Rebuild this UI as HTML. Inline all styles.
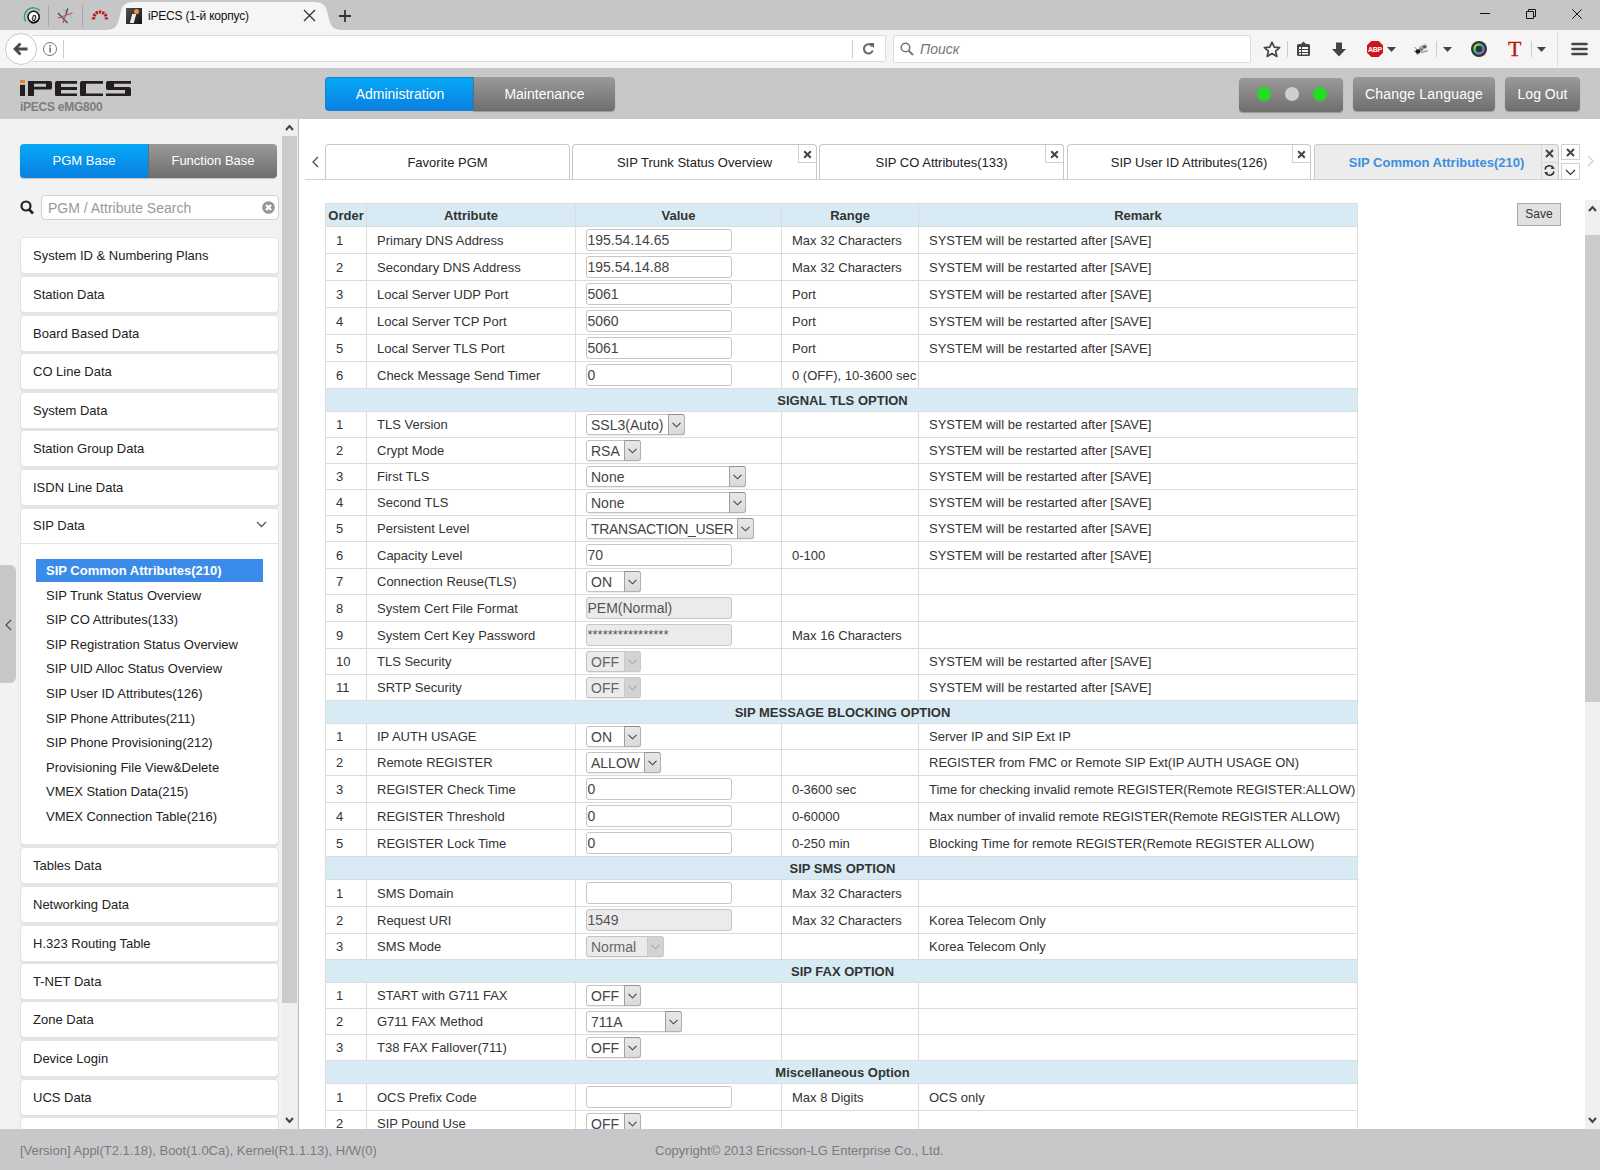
<!DOCTYPE html>
<html><head><meta charset="utf-8"><title>iPECS</title>
<style>
*{box-sizing:border-box}
html,body{margin:0;padding:0}
body{width:1600px;height:1170px;overflow:hidden;position:relative;font-family:"Liberation Sans",sans-serif;color:#333;background:#fff}
.a{position:absolute}
/* browser chrome */
#tabbar{left:0;top:0;width:1600px;height:30px;background:#c6c6c6}
#navbar{left:0;top:30px;width:1600px;height:38px;background:#f5f5f5}
#tab{left:108px;top:0;width:230px;height:30px}
#hdr{left:0;top:68px;width:1600px;height:51px;background:#c8c8ca}
.hbtn{position:absolute;top:77px;height:34px;border-radius:4px;background:linear-gradient(#9a9a9a,#6e6e6e);color:#fff;font-size:14px;text-align:center;line-height:35px;box-shadow:0 1px 1px rgba(0,0,0,.25)}
/* sidebar */
#side{left:0;top:119px;width:298px;height:1011px;background:#f2f2f2}
#sbline{left:298px;top:119px;width:1px;height:1010px;background:#bcbcbc}
.mi{position:absolute;left:20px;width:259px;height:37px;background:#fff;border:1px solid #e2e2e2;border-radius:4px;box-shadow:0 2px 0 #e4e4e4;font-size:13px;color:#222;padding-left:12px;line-height:35px}
.sub{position:absolute;left:36px;width:227px;height:23px;font-size:13px;color:#222;padding-left:10px;line-height:23px}
.sub.act{background:#3b8bea;color:#fff;font-weight:bold}
/* content */
#footer{left:0;top:1129px;width:1600px;height:41px;background:#c8c8ca;font-size:13px;color:#7a7a7a}
.tab{position:absolute;top:144px;height:35px;border:1px solid #c8c8c8;border-bottom:none;border-radius:4px 4px 0 0;background:#fff;font-size:13px;color:#222;text-align:center;line-height:35px}
.tx{position:absolute;width:18px;height:18px;border-left:1px solid #d0d0d0;border-bottom:1px solid #d0d0d0;background:transparent}
table.t{position:absolute;left:325px;top:203px;border-collapse:collapse;table-layout:fixed;width:1032px;font-size:13px;color:#333}
table.t td,table.t th{border:1px solid #dcdcdc;padding:0;white-space:nowrap;overflow:visible}
table.t th{background:#d8ebf4;font-weight:bold;height:23px;text-align:center;color:#333}
table.t tr.sec td{background:#d8ebf4;font-weight:bold;text-align:center;padding-left:2px;border-left-color:#dcdcdc;border-right-color:#dcdcdc}
.c0{text-align:left;padding-left:10px!important}
.c1{padding-left:10px!important}
.c2{padding-left:10px!important}
.c3{padding-left:10px!important}
.c4{padding-left:10px!important}
.inp{position:relative;top:-0.5px;height:22px;border:1px solid #c6c6c6;border-radius:3px;background:#fff;font-size:14px;color:#444;line-height:20px;padding-left:0.5px}
.inp.dis{background:#ebebeb;color:#555}
.sel{position:relative;top:-0.5px;height:21px;border:1px solid #c2c2c2;border-radius:3px;background:#fff;font-size:14px;color:#444;line-height:20px;padding-left:4px;box-shadow:0 1px 1px rgba(0,0,0,.08)}
.sel i{position:absolute;right:-1px;top:-1px;width:17px;height:21px;border:1px solid #b0b0b0;border-top-color:#909090;border-left-color:#a0a0a0;border-radius:0 3px 3px 0;background:linear-gradient(#e8e8e8,#dadada);color:#444;text-align:center}
.sel i svg{position:absolute;left:3px;top:7px}
.sel.dis{background:#ebebeb;color:#666}
.sel.dis i{background:#d3d3d3;color:#aaa;border-color:#cacaca}
</style></head>
<body>
<!-- ============ BROWSER TAB BAR ============ -->
<div id="tabbar" class="a">
  <!-- pinned tabs -->
  <svg class="a" style="left:22px;top:6px" width="20" height="20" viewBox="0 0 20 20">
    <path d="M3.7 15.5 A9 9 0 0 1 17.9 4.6" fill="none" stroke="#2aa866" stroke-width="1.4"/>
    <circle cx="11.6" cy="10.9" r="5.6" fill="#fff" stroke="#111" stroke-width="1.5"/>
    <path d="M9 16.4 A5.8 5.8 0 0 0 17 12" fill="none" stroke="#000" stroke-width="1.2"/>
    <text x="9.6" y="14.6" font-size="8.5" font-weight="bold" font-style="italic" font-family="Liberation Sans" fill="#111">0</text>
  </svg>
  <div class="a" style="left:48px;top:5px;width:1px;height:22px;background:#a9a9a9"></div>
  <svg class="a" style="left:56px;top:7px" width="19" height="17" viewBox="0 0 19 17">
    <path d="M2 6 L11.5 16" stroke="#3c4a66" stroke-width="1.2"/>
    <path d="M2 11 L16.5 6" stroke="#b8506a" stroke-width="1.2"/>
    <path d="M6.8 1.5 L16.5 11" stroke="#70b8d8" stroke-width="1"/>
    <path d="M11.8 1.5 L7 16" stroke="#b8506a" stroke-width="1.1"/>
    <path d="M11.8 1.5 L10 7" stroke="#3c4a66" stroke-width="1.1"/>
  </svg>
  <div class="a" style="left:82px;top:5px;width:1px;height:22px;background:#a9a9a9"></div>
  <svg class="a" style="left:90px;top:7px" width="20" height="16" viewBox="0 0 20 16">
    <path d="M3.8 12.4 A6.3 6.3 0 1 1 16.2 12.4" fill="none" stroke="#c01818" stroke-width="3.2" stroke-dasharray="2.3 1"/>
  </svg>
  <!-- active tab -->
  <svg class="a" style="left:106px;top:1px" width="236" height="29" viewBox="0 0 236 29">
    <path d="M0 29 C10 29 12 24 14 14 C16 4 19 1 28 1 L208 1 C217 1 220 4 222 14 C224 24 226 29 236 29 Z" fill="#f5f5f5"/>
  </svg>
  <div class="a" style="left:126px;top:8px;width:16px;height:16px;background:linear-gradient(135deg,#555,#111)">
    <div class="a" style="left:8px;top:1px;width:5px;height:5px;border-radius:50%;background:#f29040"></div>
    <div class="a" style="left:5px;top:6px;width:4px;height:9px;background:#eee;transform:skewX(-15deg)"></div>
  </div>
  <div class="a" style="left:148px;top:9px;font-size:12px;color:#111;white-space:nowrap;letter-spacing:-0.2px">iPECS (1-й корпус)</div>
  <svg class="a" style="left:303px;top:9px" width="13" height="13" viewBox="0 0 13 13"><path d="M1 1 L12 12 M12 1 L1 12" stroke="#333" stroke-width="1.3"/></svg>
  <svg class="a" style="left:338px;top:9px" width="14" height="14" viewBox="0 0 14 14"><path d="M7 1 V13 M1 7 H13" stroke="#333" stroke-width="1.8"/></svg>
  <!-- window controls -->
  <div class="a" style="left:1480px;top:13px;width:10px;height:1px;background:#111"></div>
  <svg class="a" style="left:1526px;top:9px" width="10" height="10" viewBox="0 0 10 10"><path d="M2.5 0.5 H9.5 V7.5 H7.5 M0.5 2.5 H7.5 V9.5 H0.5 Z M2.5 0.5 V2.5" fill="none" stroke="#111" stroke-width="1"/></svg>
  <svg class="a" style="left:1572px;top:9px" width="10" height="10" viewBox="0 0 10 10"><path d="M0.3 0.3 L9.7 9.7 M9.7 0.3 L0.3 9.7" stroke="#111" stroke-width="1"/></svg>
</div>
<!-- ============ NAV BAR ============ -->
<div id="navbar" class="a">
  <div class="a" style="left:32px;top:5px;width:854px;height:27px;background:#fff;border:1px solid #dcdcdc;border-left:none;border-radius:0 2px 2px 0"></div>
  <div class="a" style="left:5px;top:3px;width:32px;height:32px;border-radius:50%;background:#fff;border:1px solid #c9c9c9"></div>
  <svg class="a" style="left:13px;top:12px" width="16" height="14" viewBox="0 0 16 14"><path d="M7.5 1.5 L2 7 L7.5 12.5 M2.5 7 H14.5" fill="none" stroke="#4a4a4a" stroke-width="2.8" stroke-linejoin="miter"/></svg>
  <svg class="a" style="left:42px;top:11px" width="16" height="16" viewBox="0 0 16 16"><circle cx="8" cy="8" r="6.5" fill="none" stroke="#777" stroke-width="1"/><rect x="7.3" y="6.5" width="1.6" height="5" fill="#777"/><rect x="7.3" y="4" width="1.6" height="1.6" fill="#777"/></svg>
  <div class="a" style="left:63px;top:10px;width:1px;height:18px;background:#ccc"></div>
  <div class="a" style="left:852px;top:10px;width:1px;height:18px;background:#ccc"></div>
  <svg class="a" style="left:862px;top:12px" width="13" height="13" viewBox="0 0 13 13"><path d="M10.5 4.5 A4.6 4.6 0 1 0 10.8 8.5" fill="none" stroke="#666" stroke-width="2"/><path d="M7 1 L12 1 L12 6 Z" fill="#666"/></svg>
  <div class="a" style="left:893px;top:5px;width:358px;height:28px;background:#fff;border:1px solid #dcdcdc;border-radius:2px"></div>
  <svg class="a" style="left:900px;top:12px" width="14" height="14" viewBox="0 0 14 14"><circle cx="5.5" cy="5.5" r="4.3" fill="none" stroke="#777" stroke-width="1.6"/><path d="M8.6 8.6 L13 13" stroke="#777" stroke-width="2"/></svg>
  <div class="a" style="left:920px;top:11px;font-size:14px;font-style:italic;color:#777">Поиск</div>
  <!-- toolbar icons -->
  <svg class="a" style="left:1263px;top:11px" width="18" height="17" viewBox="0 0 18 17"><path d="M9 1.2 L11.3 6.1 L16.6 6.6 L12.6 10.1 L13.8 15.4 L9 12.6 L4.2 15.4 L5.4 10.1 L1.4 6.6 L6.7 6.1 Z" fill="none" stroke="#444" stroke-width="1.7" stroke-linejoin="round"/></svg>
  <div class="a" style="left:1287px;top:11px;width:1px;height:16px;background:#ccc"></div>
  <svg class="a" style="left:1296px;top:11px" width="15" height="16" viewBox="0 0 15 16"><rect x="1" y="3" width="13" height="12" rx="1.5" fill="#444"/><path d="M5 3 L7.5 0.5 L10 3Z" fill="#444"/><rect x="3" y="6" width="2" height="2" fill="#f5f5f5"/><rect x="6" y="6" width="6" height="2" fill="#f5f5f5"/><rect x="3" y="9" width="2" height="2" fill="#f5f5f5"/><rect x="6" y="9" width="6" height="2" fill="#f5f5f5"/><rect x="3" y="12" width="2" height="1.5" fill="#f5f5f5"/><rect x="6" y="12" width="6" height="1.5" fill="#f5f5f5"/></svg>
  <svg class="a" style="left:1331px;top:12px" width="16" height="16" viewBox="0 0 16 16"><path d="M5 0.5 H11 V7 H15 L8 14.5 L1 7 H5 Z" fill="#444"/></svg>
  <svg class="a" style="left:1366px;top:10px" width="18" height="18" viewBox="0 0 18 18"><path d="M5.3 1 H12.7 L17 5.3 V12.7 L12.7 17 H5.3 L1 12.7 V5.3 Z" fill="#c9161b"/><text x="9" y="12.3" text-anchor="middle" font-size="7" font-weight="bold" font-family="Liberation Sans" fill="#fff" letter-spacing="-0.3">ABP</text></svg>
  <svg class="a" style="left:1387px;top:17px" width="9" height="5" viewBox="0 0 9 5"><path d="M0 0 H9 L4.5 5Z" fill="#444"/></svg>
  <svg class="a" style="left:1411px;top:11px" width="20" height="16" viewBox="0 0 20 16"><ellipse cx="12" cy="6.5" rx="4.5" ry="2.6" fill="#b0b0b0" transform="rotate(-25 12 6.5)"/><ellipse cx="13.5" cy="5.8" rx="1.8" ry="1.1" fill="#444"/><ellipse cx="9.5" cy="9" rx="3" ry="1.8" fill="#888" transform="rotate(-30 9.5 9)"/><ellipse cx="6.8" cy="10.5" rx="2.4" ry="2.3" fill="#1e1e1e"/><path d="M3.5 6 L6 8.5 M3 10 L5 11 M6 14 L7.5 12 M10 11.5 L14 10.5 L17 9.5" stroke="#666" stroke-width="0.9" fill="none"/></svg>
  <div class="a" style="left:1436px;top:11px;width:1px;height:16px;background:#ccc"></div>
  <svg class="a" style="left:1443px;top:17px" width="9" height="5" viewBox="0 0 9 5"><path d="M0 0 H9 L4.5 5Z" fill="#444"/></svg>
  <svg class="a" style="left:1470px;top:10px" width="18" height="18" viewBox="0 0 18 18"><circle cx="9" cy="9" r="8" fill="#333"/><circle cx="9" cy="9" r="4.5" fill="none" stroke="url(#rb)" stroke-width="2.4"/><defs><linearGradient id="rb" x1="0" y1="0" x2="1" y2="1"><stop offset="0" stop-color="#f4d03f"/><stop offset=".35" stop-color="#2ecc71"/><stop offset=".65" stop-color="#3498db"/><stop offset="1" stop-color="#e84393"/></linearGradient></defs></svg>
  <div class="a" style="left:1508px;top:7px;font-family:'Liberation Serif',serif;font-size:22px;font-weight:normal;color:#b8160d;line-height:24px;-webkit-text-stroke:0.3px #b8160d">T</div>
  <div class="a" style="left:1531px;top:11px;width:1px;height:16px;background:#ccc"></div>
  <svg class="a" style="left:1537px;top:17px" width="9" height="5" viewBox="0 0 9 5"><path d="M0 0 H9 L4.5 5Z" fill="#444"/></svg>
  <div class="a" style="left:1557px;top:2px;width:1px;height:34px;background:#ddd"></div>
  <svg class="a" style="left:1571px;top:12px" width="17" height="14" viewBox="0 0 17 14"><path d="M1.5 2 H15.5 M1.5 7 H15.5 M1.5 12 H15.5" stroke="#444" stroke-width="2.6" stroke-linecap="round"/></svg>
</div>
<!-- ============ APP HEADER ============ -->
<div id="hdr" class="a"></div>
<svg class="a" style="left:20px;top:79.5px" width="112" height="16.3" viewBox="0 0 112 17" preserveAspectRatio="none">
  <rect x="0" y="0" width="5" height="3" fill="#f07f22"/>
  <rect x="0" y="5" width="5" height="12" fill="#231f20"/>
  <path d="M8 1 H30 Q32 1 32 3 V8 Q32 10 30 10 H14 V17 H8 Z M14 4 V7 H26 V4 Z" fill="#231f20"/>
  <path d="M35 1 H57 V4 H41 V7.3 H57 V10.5 H41 V14 H57 V17 H37 Q35 17 35 15 V3 Q35 1 37 1 Z" fill="#231f20"/>
  <path d="M60 1 H83 V4 H66 V14 H83 V17 H62 Q60 17 60 15 V3 Q60 1 62 1 Z" fill="#231f20"/>
  <path d="M88 1 H111 V4 H94 V7.3 H109 Q111 7.3 111 9.3 V15 Q111 17 109 17 H86 V14 H105 V10.5 H88 Q86 10.5 86 8.5 V3 Q86 1 88 1 Z" fill="#231f20"/>
</svg>
<div class="a" style="left:20px;top:100px;font-size:12px;font-weight:bold;color:#7d7d7d;white-space:nowrap;letter-spacing:-0.25px">iPECS eMG800</div>
<div class="hbtn" style="left:325px;width:149px;background:linear-gradient(#05a9f7,#0a7fe0);border-radius:4px 0 0 4px;box-shadow:none;border:1px solid #1a7fc8;border-right:none;line-height:33px">Administration</div>
<div class="hbtn" style="left:473px;width:142px;border-radius:0 4px 4px 0;border-left:1px solid #5a6f80;line-height:34px">Maintenance</div>
<div class="hbtn" style="left:1239px;width:104px;top:78px;height:34px">
  <div class="a" style="left:17.5px;top:8.5px;width:14px;height:14px;border-radius:50%;background:#22dd22"></div>
  <div class="a" style="left:45.5px;top:8.5px;width:14px;height:14px;border-radius:50%;background:#cfcfcf"></div>
  <div class="a" style="left:73.5px;top:8.5px;width:14px;height:14px;border-radius:50%;background:#22dd22"></div>
</div>
<div class="hbtn" style="left:1353px;width:142px;letter-spacing:0.2px">Change Language</div>
<div class="hbtn" style="left:1505px;width:75px;">Log Out</div>

<!-- ============ SIDEBAR ============ -->
<div id="side" class="a"></div>
<div class="a" style="left:282px;top:119px;width:16px;height:1011px;background:#efefef"></div>
<div class="a" style="left:282px;top:136px;width:15px;height:867px;background:#cbcbcb"></div>
<svg class="a" style="left:285px;top:124px" width="9" height="7" viewBox="0 0 9 7"><path d="M1 6 L4.5 2 L8 6" fill="none" stroke="#444" stroke-width="2"/></svg>
<svg class="a" style="left:285px;top:1117px" width="9" height="7" viewBox="0 0 9 7"><path d="M1 1 L4.5 5 L8 1" fill="none" stroke="#444" stroke-width="2"/></svg>
<div id="sbline" class="a"></div>
<div class="a" style="left:20px;top:144px;width:257px;height:34px;border-radius:4px;overflow:hidden;box-shadow:0 1px 1px rgba(0,0,0,.2)">
  <div class="a" style="left:0;top:0;width:128px;height:34px;background:linear-gradient(#05a9f7,#0a7fe0);color:#fff;font-size:13px;text-align:center;line-height:34px">PGM Base</div>
  <div class="a" style="left:128px;top:0;width:129px;height:34px;background:linear-gradient(#9a9a9a,#6e6e6e);color:#fff;font-size:13px;text-align:center;line-height:34px;border-left:1px solid #5a6f80">Function Base</div>
</div>
<svg class="a" style="left:20px;top:200px" width="14" height="15" viewBox="0 0 14 15"><circle cx="6" cy="6" r="4.5" fill="none" stroke="#222" stroke-width="2.2"/><path d="M9.2 9.5 L13 13.5" stroke="#222" stroke-width="2.6"/></svg>
<div class="a" style="left:41px;top:195px;width:238px;height:25px;background:#fff;border:1px solid #cfcfcf;border-radius:4px;font-size:14px;color:#999;padding-left:6px;line-height:24px">PGM / Attribute Search</div>
<svg class="a" style="left:262px;top:201px" width="13" height="13" viewBox="0 0 13 13"><circle cx="6.5" cy="6.5" r="6.3" fill="#959595"/><path d="M4 4 L9 9 M9 4 L4 9" stroke="#fff" stroke-width="2.4"/></svg>
<div class="mi" style="top:237px">System ID &amp; Numbering Plans</div>
<div class="mi" style="top:276px">Station Data</div>
<div class="mi" style="top:315px">Board Based Data</div>
<div class="mi" style="top:353px">CO Line Data</div>
<div class="mi" style="top:392px">System Data</div>
<div class="mi" style="top:430px">Station Group Data</div>
<div class="mi" style="top:469px">ISDN Line Data</div>
<div class="mi" style="top:847px">Tables Data</div>
<div class="mi" style="top:886px">Networking Data</div>
<div class="mi" style="top:925px">H.323 Routing Table</div>
<div class="mi" style="top:963px">T-NET Data</div>
<div class="mi" style="top:1001px">Zone Data</div>
<div class="mi" style="top:1040px">Device Login</div>
<div class="mi" style="top:1079px">UCS Data</div>
<div class="mi" style="top:1117px"></div>
<div class="mi" style="top:508px;height:337px;line-height:34px;box-shadow:0 2px 0 #e4e4e4">SIP Data</div>
<div class="a" style="left:21px;top:543px;width:257px;height:1px;background:#e2e2e2"></div>
<svg class="a" style="left:256px;top:521px" width="11" height="7" viewBox="0 0 11 7"><path d="M1 1 L5.5 5.5 L10 1" fill="none" stroke="#555" stroke-width="1.3"/></svg>
<div class="sub act" style="top:559px">SIP Common Attributes(210)</div>
<div class="sub" style="top:584px">SIP Trunk Status Overview</div>
<div class="sub" style="top:608px">SIP CO Attributes(133)</div>
<div class="sub" style="top:633px">SIP Registration Status Overview</div>
<div class="sub" style="top:657px">SIP UID Alloc Status Overview</div>
<div class="sub" style="top:682px">SIP User ID Attributes(126)</div>
<div class="sub" style="top:707px">SIP Phone Attributes(211)</div>
<div class="sub" style="top:731px">SIP Phone Provisioning(212)</div>
<div class="sub" style="top:756px">Provisioning File View&amp;Delete</div>
<div class="sub" style="top:780px">VMEX Station Data(215)</div>
<div class="sub" style="top:805px">VMEX Connection Table(216)</div>
<div class="a" style="left:0;top:565px;width:16px;height:118px;background:#c8c8c8;border-radius:0 6px 6px 0"></div>
<svg class="a" style="left:5px;top:619px" width="7" height="12" viewBox="0 0 7 12"><path d="M6 1 L1 6 L6 11" fill="none" stroke="#444" stroke-width="1.1"/></svg>

<!-- ============ CONTENT ============ -->
<svg class="a" style="left:312px;top:156px" width="7" height="12" viewBox="0 0 7 12"><path d="M6 1 L1 6 L6 11" fill="none" stroke="#444" stroke-width="1.2"/></svg>
<div class="tab" style="left:325px;width:245px">Favorite PGM</div>
<div class="tab" style="left:572px;width:245px">SIP Trunk Status Overview</div>
<div class="tx" style="left:798px;top:145px"><svg class="a" style="left:4px;top:4.5px" width="9" height="9" viewBox="0 0 9 9"><path d="M1.2 1.2 L7.8 7.8 M7.8 1.2 L1.2 7.8" stroke="#444" stroke-width="2"/></svg></div>
<div class="tab" style="left:819px;width:245px">SIP CO Attributes(133)</div>
<div class="tx" style="left:1045px;top:145px"><svg class="a" style="left:4px;top:4.5px" width="9" height="9" viewBox="0 0 9 9"><path d="M1.2 1.2 L7.8 7.8 M7.8 1.2 L1.2 7.8" stroke="#444" stroke-width="2"/></svg></div>
<div class="tab" style="left:1067px;width:244px">SIP User ID Attributes(126)</div>
<div class="tx" style="left:1292px;top:145px"><svg class="a" style="left:4px;top:4.5px" width="9" height="9" viewBox="0 0 9 9"><path d="M1.2 1.2 L7.8 7.8 M7.8 1.2 L1.2 7.8" stroke="#444" stroke-width="2"/></svg></div>
<div class="tab" style="left:1314px;width:245px;background:#ececec;color:#3b8fe0;font-weight:bold">SIP Common Attributes(210)</div>
<div class="a" style="left:1541px;top:145px;width:1px;height:34px;background:#d8d8d8"></div>
<div class="a" style="left:1541px;top:162px;width:17px;height:1px;background:#d8d8d8"></div>
<svg class="a" style="left:1545px;top:149px" width="9" height="9" viewBox="0 0 9 9"><path d="M1 1 L8 8 M8 1 L1 8" stroke="#444" stroke-width="2"/></svg>
<svg class="a" style="left:1543px;top:164px" width="13" height="13" viewBox="0 0 13 13"><path d="M2 5.5 A4.6 4.6 0 0 1 10.6 4.2 M11 7.5 A4.6 4.6 0 0 1 2.4 8.8" fill="none" stroke="#333" stroke-width="1.4"/><path d="M9 1.5 L11.8 4.8 L8 5Z M4 11.5 L1.2 8.2 L5 8Z" fill="#333"/></svg>
<div class="a" style="left:1561px;top:144px;width:19px;height:16px;border:1px solid #d0d0d0;background:#fff"><svg class="a" style="left:4px;top:3px" width="9" height="9" viewBox="0 0 9 9"><path d="M1 1 L8 8 M8 1 L1 8" stroke="#444" stroke-width="2"/></svg></div>
<div class="a" style="left:1561px;top:163px;width:19px;height:17px;border:1px solid #d0d0d0;background:#fff"><svg class="a" style="left:3px;top:5px" width="11" height="7" viewBox="0 0 11 7"><path d="M1 1 L5.5 5.5 L10 1" fill="none" stroke="#333" stroke-width="1.2"/></svg></div>
<svg class="a" style="left:1587px;top:155px" width="7" height="12" viewBox="0 0 7 12"><path d="M1 1 L6 6 L1 11" fill="none" stroke="#ccc" stroke-width="1.2"/></svg>

<div class="a" style="left:305px;top:179px;width:1275px;height:1px;background:#d0d0d0"></div>
<table class="t">
<colgroup><col style="width:41px"><col style="width:209px"><col style="width:206px"><col style="width:137px"><col style="width:439px"></colgroup>
<tr><th>Order</th><th>Attribute</th><th>Value</th><th>Range</th><th>Remark</th></tr>
<tr style="height:27px"><td class="c0">1</td><td class="c1">Primary DNS Address</td><td class="c2"><div class="inp" style="width:146px">195.54.14.65</div></td><td class="c3">Max 32 Characters</td><td class="c4">SYSTEM will be restarted after [SAVE]</td></tr>
<tr style="height:27px"><td class="c0">2</td><td class="c1">Secondary DNS Address</td><td class="c2"><div class="inp" style="width:146px">195.54.14.88</div></td><td class="c3">Max 32 Characters</td><td class="c4">SYSTEM will be restarted after [SAVE]</td></tr>
<tr style="height:27px"><td class="c0">3</td><td class="c1">Local Server UDP Port</td><td class="c2"><div class="inp" style="width:146px">5061</div></td><td class="c3">Port</td><td class="c4">SYSTEM will be restarted after [SAVE]</td></tr>
<tr style="height:27px"><td class="c0">4</td><td class="c1">Local Server TCP Port</td><td class="c2"><div class="inp" style="width:146px">5060</div></td><td class="c3">Port</td><td class="c4">SYSTEM will be restarted after [SAVE]</td></tr>
<tr style="height:27px"><td class="c0">5</td><td class="c1">Local Server TLS Port</td><td class="c2"><div class="inp" style="width:146px">5061</div></td><td class="c3">Port</td><td class="c4">SYSTEM will be restarted after [SAVE]</td></tr>
<tr style="height:27px"><td class="c0">6</td><td class="c1">Check Message Send Timer</td><td class="c2"><div class="inp" style="width:146px">0</div></td><td class="c3">0 (OFF), 10-3600 sec</td><td class="c4"></td></tr>
<tr class="sec" style="height:23px"><td colspan="5">SIGNAL TLS OPTION</td></tr>
<tr style="height:26px"><td class="c0">1</td><td class="c1">TLS Version</td><td class="c2"><div class="sel" style="width:99px"><span>SSL3(Auto)</span><i><svg width="9" height="6" viewBox="0 0 9 6"><path d="M0.5 0.8 L4.5 4.8 L8.5 0.8" fill="none" stroke="currentColor" stroke-width="1.1"/></svg></i></div></td><td class="c3"></td><td class="c4">SYSTEM will be restarted after [SAVE]</td></tr>
<tr style="height:26px"><td class="c0">2</td><td class="c1">Crypt Mode</td><td class="c2"><div class="sel" style="width:55px"><span>RSA</span><i><svg width="9" height="6" viewBox="0 0 9 6"><path d="M0.5 0.8 L4.5 4.8 L8.5 0.8" fill="none" stroke="currentColor" stroke-width="1.1"/></svg></i></div></td><td class="c3"></td><td class="c4">SYSTEM will be restarted after [SAVE]</td></tr>
<tr style="height:26px"><td class="c0">3</td><td class="c1">First TLS</td><td class="c2"><div class="sel" style="width:160px"><span>None</span><i><svg width="9" height="6" viewBox="0 0 9 6"><path d="M0.5 0.8 L4.5 4.8 L8.5 0.8" fill="none" stroke="currentColor" stroke-width="1.1"/></svg></i></div></td><td class="c3"></td><td class="c4">SYSTEM will be restarted after [SAVE]</td></tr>
<tr style="height:26px"><td class="c0">4</td><td class="c1">Second TLS</td><td class="c2"><div class="sel" style="width:160px"><span>None</span><i><svg width="9" height="6" viewBox="0 0 9 6"><path d="M0.5 0.8 L4.5 4.8 L8.5 0.8" fill="none" stroke="currentColor" stroke-width="1.1"/></svg></i></div></td><td class="c3"></td><td class="c4">SYSTEM will be restarted after [SAVE]</td></tr>
<tr style="height:26px"><td class="c0">5</td><td class="c1">Persistent Level</td><td class="c2"><div class="sel" style="width:168px"><span style="letter-spacing:-0.3px">TRANSACTION_USER</span><i><svg width="9" height="6" viewBox="0 0 9 6"><path d="M0.5 0.8 L4.5 4.8 L8.5 0.8" fill="none" stroke="currentColor" stroke-width="1.1"/></svg></i></div></td><td class="c3"></td><td class="c4">SYSTEM will be restarted after [SAVE]</td></tr>
<tr style="height:27px"><td class="c0">6</td><td class="c1">Capacity Level</td><td class="c2"><div class="inp" style="width:146px">70</div></td><td class="c3">0-100</td><td class="c4">SYSTEM will be restarted after [SAVE]</td></tr>
<tr style="height:26px"><td class="c0">7</td><td class="c1">Connection Reuse(TLS)</td><td class="c2"><div class="sel" style="width:55px"><span>ON</span><i><svg width="9" height="6" viewBox="0 0 9 6"><path d="M0.5 0.8 L4.5 4.8 L8.5 0.8" fill="none" stroke="currentColor" stroke-width="1.1"/></svg></i></div></td><td class="c3"></td><td class="c4"></td></tr>
<tr style="height:27px"><td class="c0">8</td><td class="c1">System Cert File Format</td><td class="c2"><div class="inp dis" style="width:146px">PEM(Normal)</div></td><td class="c3"></td><td class="c4"></td></tr>
<tr style="height:27px"><td class="c0">9</td><td class="c1">System Cert Key Password</td><td class="c2"><div class="inp dis" style="width:146px;font-size:13px">****************</div></td><td class="c3">Max 16 Characters</td><td class="c4"></td></tr>
<tr style="height:26px"><td class="c0">10</td><td class="c1">TLS Security</td><td class="c2"><div class="sel dis" style="width:55px"><span>OFF</span><i><svg width="9" height="6" viewBox="0 0 9 6"><path d="M0.5 0.8 L4.5 4.8 L8.5 0.8" fill="none" stroke="currentColor" stroke-width="1.1"/></svg></i></div></td><td class="c3"></td><td class="c4">SYSTEM will be restarted after [SAVE]</td></tr>
<tr style="height:26px"><td class="c0">11</td><td class="c1">SRTP Security</td><td class="c2"><div class="sel dis" style="width:55px"><span>OFF</span><i><svg width="9" height="6" viewBox="0 0 9 6"><path d="M0.5 0.8 L4.5 4.8 L8.5 0.8" fill="none" stroke="currentColor" stroke-width="1.1"/></svg></i></div></td><td class="c3"></td><td class="c4">SYSTEM will be restarted after [SAVE]</td></tr>
<tr class="sec" style="height:23px"><td colspan="5">SIP MESSAGE BLOCKING OPTION</td></tr>
<tr style="height:26px"><td class="c0">1</td><td class="c1">IP AUTH USAGE</td><td class="c2"><div class="sel" style="width:55px"><span>ON</span><i><svg width="9" height="6" viewBox="0 0 9 6"><path d="M0.5 0.8 L4.5 4.8 L8.5 0.8" fill="none" stroke="currentColor" stroke-width="1.1"/></svg></i></div></td><td class="c3"></td><td class="c4">Server IP and SIP Ext IP</td></tr>
<tr style="height:26px"><td class="c0">2</td><td class="c1">Remote REGISTER</td><td class="c2"><div class="sel" style="width:75px"><span>ALLOW</span><i><svg width="9" height="6" viewBox="0 0 9 6"><path d="M0.5 0.8 L4.5 4.8 L8.5 0.8" fill="none" stroke="currentColor" stroke-width="1.1"/></svg></i></div></td><td class="c3"></td><td class="c4">REGISTER from FMC or Remote SIP Ext(IP AUTH USAGE ON)</td></tr>
<tr style="height:27px"><td class="c0">3</td><td class="c1">REGISTER Check Time</td><td class="c2"><div class="inp" style="width:146px">0</div></td><td class="c3">0-3600 sec</td><td class="c4" style="letter-spacing:-0.06px">Time for checking invalid remote REGISTER(Remote REGISTER:ALLOW)</td></tr>
<tr style="height:27px"><td class="c0">4</td><td class="c1">REGISTER Threshold</td><td class="c2"><div class="inp" style="width:146px">0</div></td><td class="c3">0-60000</td><td class="c4" style="letter-spacing:-0.05px">Max number of invalid remote REGISTER(Remote REGISTER ALLOW)</td></tr>
<tr style="height:27px"><td class="c0">5</td><td class="c1">REGISTER Lock Time</td><td class="c2"><div class="inp" style="width:146px">0</div></td><td class="c3">0-250 min</td><td class="c4" style="letter-spacing:-0.02px">Blocking Time for remote REGISTER(Remote REGISTER ALLOW)</td></tr>
<tr class="sec" style="height:23px"><td colspan="5">SIP SMS OPTION</td></tr>
<tr style="height:27px"><td class="c0">1</td><td class="c1">SMS Domain</td><td class="c2"><div class="inp" style="width:146px"></div></td><td class="c3">Max 32 Characters</td><td class="c4"></td></tr>
<tr style="height:27px"><td class="c0">2</td><td class="c1">Request URI</td><td class="c2"><div class="inp dis" style="width:146px">1549</div></td><td class="c3">Max 32 Characters</td><td class="c4">Korea Telecom Only</td></tr>
<tr style="height:26px"><td class="c0">3</td><td class="c1">SMS Mode</td><td class="c2"><div class="sel dis" style="width:78px"><span>Normal</span><i><svg width="9" height="6" viewBox="0 0 9 6"><path d="M0.5 0.8 L4.5 4.8 L8.5 0.8" fill="none" stroke="currentColor" stroke-width="1.1"/></svg></i></div></td><td class="c3"></td><td class="c4">Korea Telecom Only</td></tr>
<tr class="sec" style="height:23px"><td colspan="5">SIP FAX OPTION</td></tr>
<tr style="height:26px"><td class="c0">1</td><td class="c1">START with G711 FAX</td><td class="c2"><div class="sel" style="width:55px"><span>OFF</span><i><svg width="9" height="6" viewBox="0 0 9 6"><path d="M0.5 0.8 L4.5 4.8 L8.5 0.8" fill="none" stroke="currentColor" stroke-width="1.1"/></svg></i></div></td><td class="c3"></td><td class="c4"></td></tr>
<tr style="height:26px"><td class="c0">2</td><td class="c1">G711 FAX Method</td><td class="c2"><div class="sel" style="width:96px"><span>711A</span><i><svg width="9" height="6" viewBox="0 0 9 6"><path d="M0.5 0.8 L4.5 4.8 L8.5 0.8" fill="none" stroke="currentColor" stroke-width="1.1"/></svg></i></div></td><td class="c3"></td><td class="c4"></td></tr>
<tr style="height:26px"><td class="c0">3</td><td class="c1">T38 FAX Fallover(711)</td><td class="c2"><div class="sel" style="width:55px"><span>OFF</span><i><svg width="9" height="6" viewBox="0 0 9 6"><path d="M0.5 0.8 L4.5 4.8 L8.5 0.8" fill="none" stroke="currentColor" stroke-width="1.1"/></svg></i></div></td><td class="c3"></td><td class="c4"></td></tr>
<tr class="sec" style="height:23px"><td colspan="5">Miscellaneous Option</td></tr>
<tr style="height:27px"><td class="c0">1</td><td class="c1">OCS Prefix Code</td><td class="c2"><div class="inp" style="width:146px"></div></td><td class="c3">Max 8 Digits</td><td class="c4">OCS only</td></tr>
<tr style="height:26px"><td class="c0">2</td><td class="c1">SIP Pound Use</td><td class="c2"><div class="sel" style="width:55px"><span>OFF</span><i><svg width="9" height="6" viewBox="0 0 9 6"><path d="M0.5 0.8 L4.5 4.8 L8.5 0.8" fill="none" stroke="currentColor" stroke-width="1.1"/></svg></i></div></td><td class="c3"></td><td class="c4"></td></tr>
</table>
<div class="a" style="left:1517px;top:203px;width:44px;height:23px;border:1px solid #a8a8a8;background:#e1e1e1;font-size:12px;color:#333;text-align:center;line-height:21px">Save</div>
<!-- right scrollbar -->
<div class="a" style="left:1585px;top:200px;width:15px;height:930px;background:#f0f0f0"></div>
<div class="a" style="left:1585px;top:235px;width:15px;height:467px;background:#cbcbcb"></div>
<svg class="a" style="left:1588px;top:205px" width="9" height="7" viewBox="0 0 9 7"><path d="M1 6 L4.5 2 L8 6" fill="none" stroke="#444" stroke-width="2"/></svg>
<svg class="a" style="left:1588px;top:1117px" width="9" height="7" viewBox="0 0 9 7"><path d="M1 1 L4.5 5 L8 1" fill="none" stroke="#444" stroke-width="2"/></svg>

<!-- ============ FOOTER ============ -->
<div id="footer" class="a">
  <div class="a" style="left:20px;top:14px;white-space:nowrap">[Version] Appl(T2.1.18), Boot(1.0Ca), Kernel(R1.1.13), H/W(0)</div>
  <div class="a" style="left:655px;top:14px;white-space:nowrap">Copyright© 2013 Ericsson-LG Enterprise Co., Ltd.</div>
</div>
</body></html>
